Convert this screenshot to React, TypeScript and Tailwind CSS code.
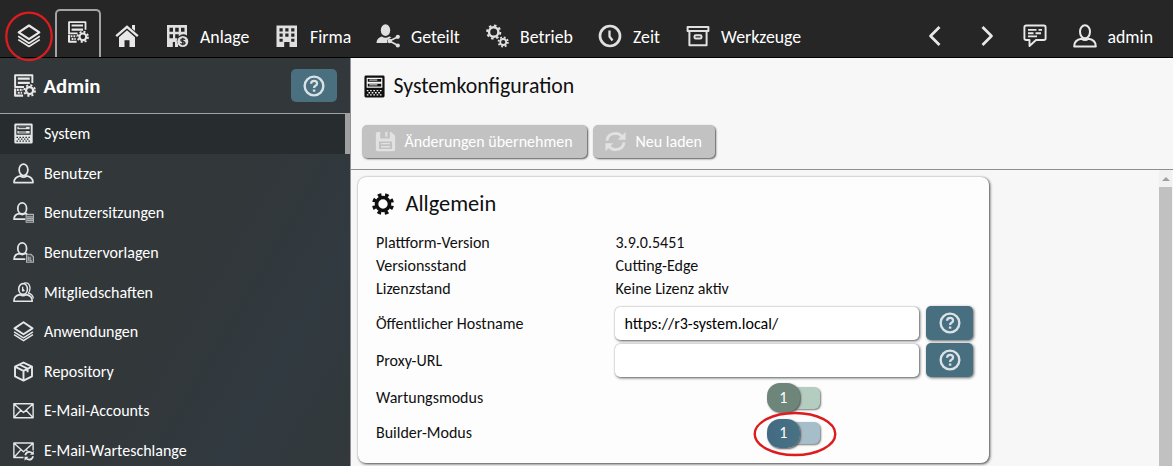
import type { ReactNode } from "react";

type IconProps = { className?: string };

function Svg({ className = "size-6", children }: { className?: string; children: ReactNode }) {
  return (
    <svg viewBox="0 0 24 24" className={`shrink-0 ${className}`} fill="none" stroke="currentColor" strokeWidth="2" strokeLinejoin="round">
      {children}
    </svg>
  );
}

const Layers = ({ className }: IconProps) => (
  <Svg className={className}>
    <path d="M12 1.500 22.300 8.400 12 15.200 1.700 8.400Z" strokeWidth="2.200" />
    <path d="M1.200 12.300 12 19.200 22.800 12.300M1.200 15.600 12 22.500 22.800 15.600" strokeWidth="1.700" />
  </Svg>
);

const Server = ({ className = "size-6", dots }: IconProps & { dots: string }) => (
  <Svg className={className}>
    <path fill="currentColor" stroke="none" fillRule="evenodd" d="M3 .500h18q1.500 0 1.500 1.500v20q0 1.500-1.500 1.500H3Q1.500 23.500 1.500 22V2Q1.500.500 3 .500ZM3.800 2.800V13.400h16.400V2.800Z" />
    <path d="M5 5.600h14M5 10.600h14" strokeWidth="2.900" />
    <path className={dots} d="M6.500 5.300h8.500M6.500 10.300h8.500" strokeWidth="1" />
    <g className={dots} strokeWidth="1.400" strokeDasharray="1.700 1.700">
      <path d="M4 16.300h16" />
      <path d="M5.700 18.500h13" />
      <path d="M4 20.700h16" />
    </g>
  </Svg>
);

const ServerGear = ({ className }: IconProps) => (
  <Svg className={className}>
    <path d="M11.500 13.500H2.200V1.300h18V9.500" strokeWidth="2" />
    <path d="M5 4.900h12.500M5 9.300h12.500" strokeWidth="2.400" />
    <path d="M2.200 15v7.600h8.300" strokeWidth="2.200" />
    <path d="M4 16.600h6.500M5 19.600h4.500" strokeWidth="2.200" strokeDasharray="2 1" />
    <circle cx="17.300" cy="17.300" r="3.700" strokeWidth="2.300" />
    <circle cx="17.300" cy="17.300" r="5.600" strokeWidth="2" strokeDasharray="2.200 2.200" />
  </Svg>
);

const Home = ({ className }: IconProps) => (
  <Svg className={className}>
    <path d="M1.200 12.200 12 2.800 22.800 12.200" strokeWidth="2.400" strokeLinejoin="miter" />
    <path fill="currentColor" stroke="none" d="M12 6.300 20 13.200V23h-5.500v-6.700h-5V23H4v-9.800ZM17 1h3v6l-3-2.600Z" />
  </Svg>
);

const BuildingMoney = ({ className }: IconProps) => (
  <Svg className={className}>
    <path fill="currentColor" stroke="none" fillRule="evenodd" d="M2 1h20v10.500a6.500 6.500 0 0 0-9 9V23h-3v-5H7.800v5H2ZM4.500 3.700v4h3.500v-4ZM10.200 3.700v4h3.500v-4ZM16 3.700v4h3.500v-4ZM4.500 10.200v4h3.500v-4ZM10.200 10.200v4h2.100l1.400-1.800v-2.200Z" />
    <circle cx="17.800" cy="17.500" r="5.500" fill="currentColor" stroke="none" />
    <path className="stroke-[#262626]" strokeWidth="1.300" d="M20 15.800q-.5-1-2.200-1-2 0-2 1.300t2 1.400q2.200.2 2.200 1.500t-2.200 1.300q-1.800 0-2.300-1M17.800 13.700v7.600" />
  </Svg>
);

const Building = ({ className }: IconProps) => (
  <Svg className={className}>
    <path fill="currentColor" stroke="none" fillRule="evenodd" d="M1.500 1.500h20.500V23h-7.500v-5H9.200v5H1.500ZM4.500 4.300v3.200h3.200V4.300ZM10.300 4.300v3.200h3.200V4.300ZM16.200 4.300v3.200h3.200V4.300ZM4.500 9.600v3.200h3.200V9.600ZM10.300 9.600v3.200h3.200V9.600ZM16.200 9.600v3.200h3.200V9.600ZM4.500 14.700v3h3.200v-3ZM16.200 14.700v3h3.200v-3Z" />
  </Svg>
);

const UserShare = ({ className }: IconProps) => (
  <Svg className={className}>
    <ellipse cx="9.500" cy="6.200" rx="4.700" ry="5.900" fill="currentColor" stroke="none" />
    <path fill="currentColor" stroke="none" d="M.500 19q0-5 5.300-6.500 3.700 2.500 7.400 0l2.300.8-4.200 2.600v3.100Z" />
    <path d="M22 12.800 13.500 17l8.500 4.500" strokeWidth="1.600" />
    <circle cx="21.800" cy="12.800" r="2.100" fill="currentColor" stroke="none" />
    <circle cx="13.800" cy="17" r="2.200" fill="currentColor" stroke="none" />
    <circle cx="21.800" cy="21.500" r="2.100" fill="currentColor" stroke="none" />
  </Svg>
);

const Gears = ({ className }: IconProps) => (
  <Svg className={className}>
    <circle cx="8.700" cy="8" r="4.700" strokeWidth="2.400" />
    <circle cx="8.700" cy="8" r="6.600" strokeWidth="2" strokeDasharray="2.590 2.594" />
    <circle cx="18.200" cy="18" r="3" strokeWidth="1.800" />
    <circle cx="18.200" cy="18" r="4.700" strokeWidth="1.800" strokeDasharray="1.840 1.850" />
  </Svg>
);

const Clock = ({ className }: IconProps) => (
  <Svg className={className}>
    <circle cx="12" cy="12" r="10" strokeWidth="2.700" />
    <path d="M11.500 6.500v6l3 4" strokeWidth="2.300" />
  </Svg>
);

const Archive = ({ className }: IconProps) => (
  <Svg className={className}>
    <path d="M1.600 2.900h20.800v4.200H1.600ZM3.400 7.100v14.200h17.200V7.100" />
    <rect x="8.500" y="11.200" width="7" height="3.300" rx="1.200" />
  </Svg>
);

const Chat = ({ className }: IconProps) => (
  <Svg className={className}>
    <path d="M3.200 1.500h17.600q1.800 0 1.800 1.800v10.900q0 1.800-1.800 1.800H13l-6.500 6V16H3.200q-1.800 0-1.800-1.800V3.300q0-1.800 1.800-1.800Z" strokeWidth="1.900" />
    <path d="M5 5.900h8.500M15.500 5.900h3.500M5 9.200h5.500M12.500 9.200H18M5 12.400h9" strokeWidth="1.900" />
  </Svg>
);

const User = ({ className }: IconProps) => (
  <Svg className={className}>
    <ellipse cx="12" cy="7.800" rx="5" ry="6.500" />
    <path d="M8.500 14.800Q1.200 16 1.200 22.400h21.600q0-6.400-7.300-7.600-3.500 2.600-7 0Z" />
  </Svg>
);

const UserBadge = ({ className, page }: IconProps & { page?: boolean }) => (
  <Svg className={className}>
    <ellipse cx="10.500" cy="7.300" rx="5" ry="6.200" />
    <path d="M14 19.700H1.200q0-5.600 6-6.400 3.300 2.200 6.600 0h2.500" />
    <g className="opacity-70">
      {page ? (
        <>
          <path d="M15.500 14h5l3 3v6.200h-8Z" strokeWidth="1.300" fill="currentColor" fillOpacity=".25" />
          <path d="M17.500 16.500v5M19.500 17v4.500h2" strokeWidth="1.300" />
        </>
      ) : (
        <path d="M15 14.200h8.500v9H15ZM16 17h7M16 19h7M16 21h7" strokeWidth="1.300" fill="currentColor" fillOpacity=".25" />
      )}
    </g>
  </Svg>
);

const Members = ({ className }: IconProps) => (
  <Svg className={className}>
    <ellipse cx="11.500" cy="8" rx="5" ry="6.200" strokeWidth="1.900" />
    <path d="M8 14.500Q1 15.600 1 22h21q0-6.400-7-7.500-3.500 2.400-7 0Z" strokeWidth="1.900" />
    <path d="M12.500 1.300q5.500-1.700 6.800 4.200.6 4.300-1.800 7.200 5.500 1.300 5.700 6.300M11 5.300v5.500M11 8l2 2.500" strokeWidth="1.500" />
  </Svg>
);

const Box = ({ className }: IconProps) => (
  <Svg className={className}>
    <path d="M12 1.800 21.700 6.300v11.200L12 22.300 2.300 17.500V6.300ZM2.300 6.500 12 11.200l9.700-4.700M12 11v11M7 4l9.700 4.800v4" strokeWidth="2.200" />
  </Svg>
);

const Mail = ({ className }: IconProps) => (
  <Svg className={className}>
    <path d="M1 4.300h22v16H1ZM1.500 4.800 12 14.300 22.500 4.800M1.500 19.800 9 11.800M22.500 19.800 15 11.800" strokeWidth="1.600" />
  </Svg>
);

const MailSync = ({ className }: IconProps) => (
  <Svg className={className}>
    <path d="M12 20H1V3.500h22V12M1.500 4 12 13.500 22.500 4M1.500 19.500 9 11.300M15 11l1.500 1.500" strokeWidth="1.600" />
    <path d="M14 17.500q1-4 4.500-4 2.200 0 3.500 1.700M23 18.500q-1 4-4.500 4-2.200 0-3.500-1.700" strokeWidth="2" />
    <path fill="currentColor" stroke="none" d="M23.800 12.300v4.500h-4.500ZM13.200 23.700v-4.500h4.500Z" />
  </Svg>
);

const Save = ({ className }: IconProps) => (
  <Svg className={className}>
    <path fill="currentColor" stroke="none" fillRule="evenodd" d="M3 1h3v7.500h11V1h1.500L23 5.500V21q0 2-2 2H3q-2 0-2-2V3q0-2 2-2ZM4.500 12v8.500h15V12Z" />
    <path d="M7 14.500h10M7 18h10" strokeWidth="1.500" />
    <path d="M13 1v5.500" strokeWidth="2.500" />
  </Svg>
);

const Refresh = ({ className }: IconProps) => (
  <Svg className={className}>
    <path d="M2.200 11Q3.200 3 12 2.700q4.200 0 7.200 3.300M21.800 13q-1 8-9.800 8.300-4.200 0-7.200-3.300" strokeWidth="3.200" />
    <path fill="currentColor" stroke="none" d="M23.500 1v9h-9ZM.500 23v-9h9Z" />
  </Svg>
);

const Gear = ({ className }: IconProps) => (
  <Svg className={className}>
    <circle cx="12" cy="12" r="6.500" strokeWidth="3.600" />
    <circle cx="12" cy="12" r="9.300" strokeWidth="3.400" strokeDasharray="3.650 3.654" strokeDashoffset="-1.825" />
  </Svg>
);

const Question = ({ className }: IconProps) => (
  <Svg className={className}>
    <circle cx="12" cy="12" r="10.200" strokeWidth="2.600" />
    <path d="M8.800 9.500q.2-3 3.300-3t3.200 2.700q0 1.700-1.700 2.600-1.500.9-1.500 2.300" strokeWidth="2.500" />
    <path d="M12.100 15.800v2.400" strokeWidth="2.700" />
  </Svg>
);

const Chevron = ({ right }: { right?: boolean }) => (
  <Svg className="size-6">
    <path d={right ? "M7.500 3 16.500 12 7.500 21" : "M16.500 3 7.500 12 16.500 21"} strokeWidth="2.700" />
  </Svg>
);

const modules = [
  { label: "Anlage", icon: BuildingMoney, width: "w-[110px]" },
  { label: "Firma", icon: Building, width: "w-[101px]" },
  { label: "Geteilt", icon: UserShare, width: "w-[109px]" },
  { label: "Betrieb", icon: Gears, width: "w-[113px]" },
  { label: "Zeit", icon: Clock, width: "w-[88px]" },
  { label: "Werkzeuge", icon: Archive, width: "w-[130px]" },
];

const entries: { label: string; icon: ReactNode }[] = [
  { label: "System", icon: <Server className="size-[21px]" dots="stroke-[#272d2f]" /> },
  { label: "Benutzer", icon: <User className="size-[21px]" /> },
  { label: "Benutzersitzungen", icon: <UserBadge className="size-[21px]" /> },
  { label: "Benutzervorlagen", icon: <UserBadge className="size-[21px]" page /> },
  { label: "Mitgliedschaften", icon: <Members className="size-[21px]" /> },
  { label: "Anwendungen", icon: <Layers className="size-[21px]" /> },
  { label: "Repository", icon: <Box className="size-[21px]" /> },
  { label: "E-Mail-Accounts", icon: <Mail className="size-[21px]" /> },
  { label: "E-Mail-Warteschlange", icon: <MailSync className="size-[21px]" /> },
];

function TopBar() {
  return (
    <header className="flex h-[58px] shrink-0 items-end border-b border-black bg-[#262626] text-[17.8px] text-white">
      <div className="relative ml-[17px] flex h-[42px] w-[38px] items-center text-[#e8e8e8]">
        <Layers className="size-6" />
        <svg className="absolute -top-[5px] -left-[13px] z-10 h-[52px] w-[50px]" viewBox="0 0 50 52" fill="none">
          <ellipse cx="25" cy="26.400" rx="22.700" ry="23.800" className="stroke-[#dc1c1e]" strokeWidth="2.300" />
        </svg>
      </div>
      <div className="flex h-12 w-[46px] justify-center rounded-t-[5px] border-2 border-b-0 border-[#a4a4a4] pt-[10px] text-[#e8e8e8]">
        <ServerGear className="size-[22px]" />
      </div>
      <div className="ml-[14px] flex h-[42px] w-[50px] items-center text-[#e8e8e8]">
        <Home className="size-6" />
      </div>
      {modules.map(({ label, icon: Icon, width }) => (
        <div key={label} className={`flex h-[42px] items-center gap-[11px] ${width}`}>
          <Icon className="size-6 text-[#e0e0e0]" />
          <span className="pt-[2px]">{label}</span>
        </div>
      ))}
      <div className="mr-5 ml-auto flex h-[42px] items-center text-[#e8e8e8]">
        <Chevron />
        <span className="ml-7 flex"><Chevron right /></span>
        <Chat className="ml-6 size-6" />
        <User className="ml-[26px] size-6" />
        <span className="ml-[11px] pt-[2px] text-white">admin</span>
      </div>
    </header>
  );
}

function Sidebar() {
  return (
    <aside className="flex w-[351px] shrink-0 flex-col overflow-hidden border-r border-[#8f9193] bg-[linear-gradient(120deg,#32373a_0%,#32373a_55%,#313a40_78%,#32383b_100%)] text-white">
      <div className="flex h-14 shrink-0 items-center border-b border-[#a0a2a3] pr-[13px] pl-[13px]">
        <ServerGear className="size-[23px] text-[#e8e8e8]" />
        <h1 className="ml-[7.500px] pt-px text-[20.8px] leading-6 font-bold">Admin</h1>
        <button className="ml-auto flex h-[33px] w-[46px] items-center justify-center rounded-[5px] bg-[#4a7080] text-[#d9e2e6]">
          <Question className="size-[22px]" />
        </button>
      </div>
      <nav className="flex flex-col">
        {entries.map(({ label, icon }, i) => (
          <div key={label} className={`flex h-[39.6px] shrink-0 items-center gap-[10.5px] pl-[12.5px] text-base ${i === 0 ? "border-r-[5px] border-[#a0a0a0] bg-[#272d2f]" : ""}`}>
            <span className="flex text-[#e4e6e7]">{icon}</span>
            <span className="pt-px">{label}</span>
          </div>
        ))}
      </nav>
    </aside>
  );
}

function HelpButton() {
  return (
    <button className="ml-[7px] flex h-[34px] w-[47px] items-center justify-center rounded-[5px] bg-[#476f80] text-[#d9e2e6] shadow-[1px_1px_3px_#666]">
      <Question className="size-[22px]" />
    </button>
  );
}

function Toggle({ knob, track }: { knob: string; track: string }) {
  return (
    <div className="ml-[151.500px] flex items-center">
      <span className={`z-[1] flex h-[29px] w-[33.500px] items-center justify-center rounded-[13px] text-white shadow-[1px_1px_2px_#555] ${knob}`}>1</span>
      <span className={`-ml-3 h-[22px] w-8 rounded-[6px] shadow-[1px_1px_2px_#777] ${track}`} />
    </div>
  );
}

function Row({ label, height, labelClass = "", children }: { label: string; height: string; labelClass?: string; children: ReactNode }) {
  return (
    <div className={`flex items-center ${height}`}>
      <label className={`w-[239px] shrink-0 ${labelClass}`}>{label}</label>
      {children}
    </div>
  );
}

const inputClass = "h-[33px] w-[304px] rounded-[5px] bg-white px-[9.500px] text-base text-black shadow-[1px_1px_3px_#555,0_0_1px_#999] outline-none";

function Settings() {
  return (
    <section className="mt-[7px] ml-[7px] h-[286px] w-[631px] rounded-[8px] bg-[#fdfdfd] pl-[18px] shadow-[1px_1px_3px_#444,0_0_1px_#aaa]">
      <div className="-ml-[5px] flex h-[54px] items-center gap-[10.500px] text-[22.4px]">
        <Gear className="size-6" />
        <h3>Allgemein</h3>
      </div>
      <Row label="Plattform-Version" height="h-[23px]"><span className="pl-[.5px]">3.9.0.5451</span></Row>
      <Row label="Versionsstand" height="h-[23px]"><span className="pl-[.5px]">Cutting-Edge</span></Row>
      <Row label="Lizenzstand" height="h-[23px]"><span className="pl-[.5px]">Keine Lizenz aktiv</span></Row>
      <div className="h-1" />
      <Row label="Öffentlicher Hostname" height="h-[38px]" labelClass="pt-[2px]">
        <input className={inputClass} defaultValue="https://r3-system.local/" />
        <HelpButton />
      </Row>
      <Row label="Proxy-URL" height="h-9" labelClass="pt-[2px]">
        <input className={inputClass} />
        <HelpButton />
      </Row>
      <div className="h-px" />
      <Row label="Wartungsmodus" height="h-[37px]">
        <Toggle knob="bg-[#6d8679]" track="bg-[#b5ccc0]" />
      </Row>
      <Row label="Builder-Modus" height="h-[34px]">
        <div className="relative">
          <Toggle knob="bg-linear-to-r from-[#426a82] to-[#4a7284]" track="bg-[#a6bdca]" />
          <svg className="absolute -top-2 left-[138px] z-10 h-[46px] w-[84px]" viewBox="0 0 84 46" fill="none">
            <ellipse cx="42" cy="23" rx="40.300" ry="21" className="stroke-[#dc1c1e]" strokeWidth="2.400" />
          </svg>
        </div>
      </Row>
    </section>
  );
}

export default function App() {
  return (
    <div className="flex h-[466px] w-[1173px] flex-col overflow-hidden bg-[#f7f7f7] font-['Carlito','Lato',sans-serif] text-base text-[#101010]">
      <TopBar />
      <div className="flex min-h-0 flex-1">
        <Sidebar />
        <main className="flex min-w-0 flex-1 flex-col">
          <div className="flex h-14 shrink-0 items-center gap-2 pl-[11.500px] text-[21.8px]">
            <Server className="size-[23px]" dots="stroke-[#f7f7f7]" />
            <h2 className="pt-px">Systemkonfiguration</h2>
          </div>
          <div className="flex h-14 shrink-0 items-start gap-[6px] border-b border-[#8d8f91] pt-[10.500px] pl-[11px] text-white">
            <button className="flex h-[33px] w-[225px] items-center gap-[9px] rounded-[5px] bg-[#c2c2c2] pl-[12.500px] shadow-[1px_1px_2px_#555]">
              <Save className="size-[21px] text-[#e2e2e2]" />
              <span className="pt-[2px]">Änderungen übernehmen</span>
            </button>
            <button className="flex h-[33px] w-[121.500px] items-center gap-[10px] rounded-[5px] bg-[#c2c2c2] pl-[11.500px] shadow-[1px_1px_2px_#555]">
              <Refresh className="size-[21px] text-[#e2e2e2]" />
              <span className="pt-[2px]">Neu laden</span>
            </button>
          </div>
          <div className="flex min-h-0 flex-1 justify-between overflow-hidden">
            <Settings />
            <div className="mr-px flex w-[13px] flex-col bg-[#c1c1c1]">
              <div className="flex h-[17px] items-center justify-center bg-[#f1f1f1]">
                <svg viewBox="0 0 8 4" className="h-1 w-2 fill-[#a0a0a0]"><path d="M4 0 8 4H0Z" /></svg>
              </div>
            </div>
          </div>
        </main>
      </div>
    </div>
  );
}
